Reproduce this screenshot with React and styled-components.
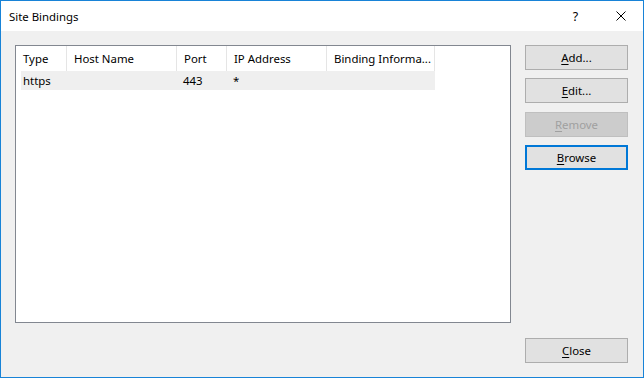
import React from "react";
import styled, { createGlobalStyle } from "styled-components";

const Global = createGlobalStyle`
  html, body { margin: 0; padding: 0; background: #ffffff; }
  body { font-family: "Noto Sans", "Liberation Sans", sans-serif; font-size: 11.4px; color: #000; }
  * { box-sizing: border-box; }
`;

const Window = styled.div`
  width: 644px;
  height: 378px;
  border: 1px solid #1883d7;
  display: flex;
  flex-direction: column;
  background: #f0f0f0;
`;

const TitleBar = styled.div`
  height: 30px;
  background: #ffffff;
  display: flex;
  align-items: center;
  padding-left: 8px;
  flex-shrink: 0;
`;

const Title = styled.div`
  flex: 1;
  color: #000;
`;

const TitleButton = styled.div`
  width: 45px;
  height: 30px;
  display: flex;
  align-items: center;
  justify-content: center;
  font-size: 12.5px;
  color: #000;
`;

const Body = styled.div`
  flex: 1;
  display: grid;
  grid-template-columns: 496px 103px;
  grid-template-rows: 278px 1fr;
  column-gap: 14px;
  padding: 14px 0 0 14px;
`;

const ListBox = styled.div`
  border: 1px solid #828790;
  background: #ffffff;
  grid-row: 1;
  grid-column: 1;
`;

const Table = styled.div`
  display: grid;
  grid-template-columns: 51px 110px 50px 100px 108px;
  width: 419px;
`;

const HeadCell = styled.div`
  height: 25px;
  display: flex;
  align-items: center;
  padding-left: 7px;
  border-right: 1px solid #e5e5e5;
  white-space: nowrap;
  overflow: hidden;
  color: #000;
`;

const Cell = styled.div`
  height: 19px;
  display: flex;
  align-items: center;
  padding-left: ${(p) => (p.$first ? "2px" : "6px")};
  margin-left: ${(p) => (p.$first ? "5px" : "0")};
  background: #efefef;
  white-space: nowrap;
`;

const ButtonColumn = styled.div`
  grid-row: 1;
  grid-column: 2;
  display: flex;
  flex-direction: column;
  gap: 8px;
`;

const Button = styled.div`
  width: 103px;
  height: 25px;
  flex-shrink: 0;
  display: flex;
  align-items: center;
  justify-content: center;
  margin-top: ${(p) => p.$offset || 0}px;
  background: ${(p) => (p.$disabled ? "#cccccc" : "#e1e1e1")};
  border: ${(p) =>
    p.$focused ? "2px solid #0078d7" : p.$disabled ? "1px solid #bfbfbf" : "1px solid #adadad"};
  color: ${(p) => (p.$disabled ? "#a0a0a0" : "#000")};
`;

const Mnemonic = styled.span`
  text-decoration: underline;
  text-underline-offset: 2px;
`;

const Footer = styled.div`
  grid-row: 2;
  grid-column: 2;
  padding-top: 15px;
`;

const columns = ["Type", "Host Name", "Port", "IP Address", "Binding Informa..."];

export default function App() {
  return (
    <>
      <Global />
      <Window>
        <TitleBar>
          <Title>Site Bindings</Title>
          <TitleButton>?</TitleButton>
          <TitleButton>
            <svg width="10" height="10" viewBox="0 0 10 10">
              <path d="M0.5 0.5 L9.5 9.5 M9.5 0.5 L0.5 9.5" stroke="#000" strokeWidth="1" fill="none" />
            </svg>
          </TitleButton>
        </TitleBar>
        <Body>
          <ListBox>
            <Table>
              {columns.map((c) => (
                <HeadCell key={c}>{c}</HeadCell>
              ))}
              <Cell $first>https</Cell>
              <Cell></Cell>
              <Cell>443</Cell>
              <Cell>*</Cell>
              <Cell></Cell>
            </Table>
          </ListBox>
          <ButtonColumn>
            <Button><span><Mnemonic>A</Mnemonic>dd...</span></Button>
            <Button><span><Mnemonic>E</Mnemonic>dit...</span></Button>
            <Button $disabled $offset={1}><span><Mnemonic>R</Mnemonic>emove</span></Button>
            <Button $focused><span><Mnemonic>B</Mnemonic>rowse</span></Button>
          </ButtonColumn>
          <Footer>
            <Button><span><Mnemonic>C</Mnemonic>lose</span></Button>
          </Footer>
        </Body>
      </Window>
    </>
  );
}
